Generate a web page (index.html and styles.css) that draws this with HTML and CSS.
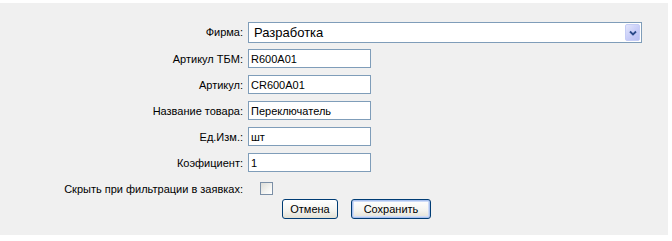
FILE: index.html
```html
<!DOCTYPE html>
<html lang="ru">
<head>
    <meta charset="UTF-8">
    <title>Товар</title>
    <link rel="stylesheet" href="styles.css">
</head>
<body>
    <div class="panel">
        <form class="item-form">
            <label class="caption" for="firm">Фирма:</label>
            <div class="field">
                <div class="select-box" id="firm">
                    <span class="select-value">Разработка</span>
                    <span class="select-arrow">
                        <svg width="8" height="6" viewBox="0 0 8 6"><path d="M1 1.5 L4 4.5 L7 1.5" fill="none" stroke="#2b4a8a" stroke-width="1.8"/></svg>
                    </span>
                </div>
            </div>

            <label class="caption" for="tbm">Артикул ТБМ:</label>
            <div class="field"><input class="text-input" id="tbm" type="text" value="R600A01"></div>

            <label class="caption" for="article">Артикул:</label>
            <div class="field"><input class="text-input" id="article" type="text" value="CR600A01"></div>

            <label class="caption" for="name">Название товара:</label>
            <div class="field"><input class="text-input" id="name" type="text" value="Переключатель"></div>

            <label class="caption" for="unit">Ед.Изм.:</label>
            <div class="field"><input class="text-input" id="unit" type="text" value="шт"></div>

            <label class="caption" for="ratio">Коэфициент:</label>
            <div class="field"><input class="text-input" id="ratio" type="text" value="1"></div>

            <label class="caption" for="hide">Скрыть при фильтрации в заявках:</label>
            <div class="field check-field"><span class="check-box" id="hide"></span></div>

            <div class="buttons">
                <button type="button" class="xp-button">Отмена</button>
                <button type="button" class="xp-button default">Сохранить</button>
            </div>
        </form>
    </div>
</body>
</html>
```

FILE: styles.css
```css
body {
    margin: 0;
    background: #ffffff;
    font-family: "Liberation Sans", Arial, sans-serif;
    font-size: 11px;
    color: #000000;
}

.panel {
    margin-top: 3px;
    width: 668px;
    height: 232px;
    background-color: #f0f0f0;
    box-sizing: border-box;
    padding-top: 19px;
}

.item-form {
    display: grid;
    grid-template-columns: 243px 394px;
    column-gap: 5px;
    row-gap: 7px;
    align-items: center;
}

.caption {
    text-align: right;
    white-space: nowrap;
}

.field {
    display: flex;
    align-items: center;
}

.select-box {
    width: 394px;
    height: 21px;
    box-sizing: border-box;
    border: 1px solid #7f9db9;
    background: #ffffff;
    display: flex;
    align-items: center;
    justify-content: space-between;
    padding: 0 1px 0 5px;
    font-size: 13px;
    margin-bottom: -1px;
}

.select-arrow {
    width: 15px;
    height: 17px;
    border-radius: 2px;
    background: linear-gradient(135deg, #e3e6fc 0%, #c8cdf8 55%, #b9bff3 100%);
    border: 1px solid #c6cdf6;
    display: flex;
    align-items: center;
    justify-content: center;
    box-sizing: border-box;
}

.text-input {
    width: 123px;
    height: 19px;
    box-sizing: border-box;
    border: 1px solid #7f9db9;
    background: #ffffff;
    padding: 0 2px;
    margin: 0;
    font-family: "Liberation Sans", Arial, sans-serif;
    font-size: 11px;
    color: #000000;
    outline: none;
}

.check-field {
    height: 19px;
    padding-left: 12px;
}

.check-box {
    width: 13px;
    height: 13px;
    box-sizing: border-box;
    border: 1px solid #7b8fa6;
    background: linear-gradient(135deg, #dcdcd7 0%, #f4f4f1 60%, #ffffff 100%);
}

.buttons {
    grid-column: 2;
    display: flex;
    gap: 13px;
    padding-left: 34px;
    margin-top: -6px;
}

.xp-button {
    height: 20px;
    padding: 0 7px;
    font-family: "Liberation Sans", Arial, sans-serif;
    font-size: 11px;
    color: #000000;
    border: 1px solid #003c74;
    border-radius: 3px;
    background: linear-gradient(#ffffff 0%, #f3f3ef 60%, #e2e0d4 100%);
    min-width: 56px;
}

.xp-button.default {
    min-width: 80px;
    box-shadow: inset 0 0 0 1px #a9c1ee, inset 0 0 0 2px #cfdcf7;
}
```
